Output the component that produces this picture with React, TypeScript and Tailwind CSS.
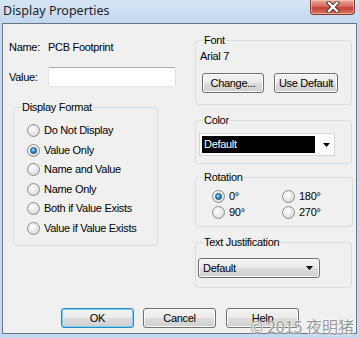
import React from "react";

const FONT = "font-['Liberation_Sans',Arial,sans-serif] text-[11px] leading-[13px] tracking-[-0.3px] text-black";

function Radio({ checked }: { checked?: boolean }) {
  return (
    <span className="inline-flex w-[13px] h-[13px] shrink-0 items-center justify-center rounded-full border border-[#8d8d8d] bg-[radial-gradient(circle_at_40%_35%,#ffffff_0%,#e6e6e6_55%,#c9c9c9_100%)]">
      {checked && (
        <span className="w-[7px] h-[7px] rounded-full border border-[#16486f] bg-[radial-gradient(circle_at_40%_35%,#9fe0ff_0%,#2a8ad0_55%,#0b4d86_100%)]" />
      )}
    </span>
  );
}

function RadioRow({ label, checked, className }: { label: string; checked?: boolean; className: string }) {
  return (
    <div className={"flex items-center gap-[4px] " + className}>
      <Radio checked={checked} />
      <span>{label}</span>
    </div>
  );
}

function Btn({ children, className, isDefault }: { children: React.ReactNode; className: string; isDefault?: boolean }) {
  return (
    <div
      className={
        "flex items-center justify-center h-[20px] rounded-[3px] border bg-[linear-gradient(#f3f3f3_0%,#ebebeb_48%,#dddddd_52%,#cfcfcf_100%)] " +
        (isDefault
          ? "border-[#2c88c0] shadow-[inset_0_0_0_1px_#76d4f9] "
          : "border-[#707070] shadow-[inset_0_0_0_1px_#fbfbfb] ") +
        className
      }
    >
      {children}
    </div>
  );
}

function Arrow() {
  return (
    <svg width="7" height="4" viewBox="0 0 7 4">
      <path d="M0 0 H7 L3.5 4 Z" fill="#000" />
    </svg>
  );
}

export default function App() {
  return (
    <div className={"w-[359px] h-[338px] flex flex-col bg-[#c5d9ef] overflow-hidden " + FONT}>
      {/* Title bar */}
      <div className="h-[23px] flex items-start bg-[linear-gradient(#d5e5f6,#c2d8ef)]">
        <div className="pl-[3px] pt-[3px] font-['Noto_Sans',sans-serif] text-[12.5px] leading-[16px] tracking-normal text-[#1e1e1e]">
          Display Properties
        </div>
        <div className="ml-auto mr-[4px] w-[45px] h-[15px] flex items-center justify-center rounded-b-[4px] border border-t-0 border-[#8a3a33] bg-[linear-gradient(#e9a99b_0%,#d46a5c_45%,#c24234_55%,#d9785f_100%)] shadow-[inset_0_0_0_1px_rgba(255,220,210,0.5)]">
          <svg width="14" height="12" viewBox="0 0 14 12">
            <path d="M3 2 L11 10 M11 2 L3 10" stroke="#4a2a2a" strokeWidth="4.2" strokeLinecap="square" />
            <path d="M3 2 L11 10 M11 2 L3 10" stroke="#ffffff" strokeWidth="2.4" strokeLinecap="square" />
          </svg>
        </div>
      </div>

      {/* Client area */}
      <div className="relative mx-[2px] h-[311px] flex flex-col border border-[#6b7789] bg-[#f0f0f0]">
        <div className="flex">
          {/* Left column */}
          <div className="w-[192px] pl-[6px] flex flex-col">
            <div className="mt-[17px] flex h-[13px]">
              <span className="w-[39px]">Name:</span>
              <span>PCB Footprint</span>
            </div>
            <div className="mt-[13px] flex items-center h-[20px]">
              <span className="w-[39px]">Value:</span>
              <div className="w-[128px] h-[20px] border border-[#abadb3] border-l-[#e2e3ea] border-r-[#dbdfe6] border-b-[#e3e9ef] bg-white rounded-[2px]" />
            </div>
            <fieldset className="ml-[4px] mt-[14px] w-[145px] border border-[#d5dfe5] rounded-[3px] p-0 m-0">
              <legend className="ml-[7px] px-[1px]">Display Format</legend>
              <div className="pl-[13px] pt-[7px] pb-[7px] flex flex-col">
                <RadioRow className="h-[19.5px]" label="Do Not Display" />
                <RadioRow className="h-[19.5px]" label="Value Only" checked />
                <RadioRow className="h-[19.5px]" label="Name and Value" />
                <RadioRow className="h-[19.5px]" label="Name Only" />
                <RadioRow className="h-[19.5px]" label="Both if Value Exists" />
                <RadioRow className="h-[19.5px]" label="Value if Value Exists" />
              </div>
            </fieldset>
          </div>

          {/* Right column */}
          <div className="w-[157px] flex flex-col">
            <fieldset className="mt-[10px] border border-[#d5dfe5] rounded-[3px] p-0 m-0">
              <legend className="ml-[7px] px-[1px]">Font</legend>
              <div className="pl-[4px] pt-[3px]">Arial 7</div>
              <div className="flex ml-[6px] mt-[10px] mb-[11px] gap-[10px]">
                <Btn className="w-[62px]">Change...</Btn>
                <Btn className="w-[64px]">Use Default</Btn>
              </div>
            </fieldset>

            <fieldset className="mt-[9px] border border-[#d5dfe5] rounded-[3px] p-0 m-0">
              <legend className="ml-[7px] px-[1px]">Color</legend>
              <div className="ml-[3px] mt-[6px] mb-[7px] w-[136px] h-[23px] flex items-center border border-[#d7d7d7] bg-white">
                <div className="ml-[2px] w-[113px] h-[17px] bg-black text-white flex items-center pl-[2px]">Default</div>
                <div className="ml-auto mr-[4px] flex items-center">
                  <Arrow />
                </div>
              </div>
            </fieldset>

            <fieldset className="mt-[7px] border border-[#d5dfe5] rounded-[3px] p-0 m-0">
              <legend className="ml-[7px] px-[1px]">Rotation</legend>
              <div className="pl-[16px] mt-[4px] mb-[5px] grid grid-cols-[70px_70px]">
                <RadioRow className="h-[16.5px]" label="0°" checked />
                <RadioRow className="h-[16.5px]" label="180°" />
                <RadioRow className="h-[16.5px]" label="90°" />
                <RadioRow className="h-[16.5px]" label="270°" />
              </div>
            </fieldset>

            <fieldset className="mt-[9px] border border-[#d5dfe5] rounded-[3px] p-0 m-0">
              <legend className="ml-[7px] px-[1px]">Text Justification</legend>
              <div className="ml-[2px] mt-[9px] mb-[9px] w-[122px] h-[20px] flex items-center rounded-[3px] border border-[#707070] bg-[linear-gradient(#f3f3f3_0%,#ebebeb_48%,#dddddd_52%,#cfcfcf_100%)] shadow-[inset_0_0_0_1px_#fbfbfb]">
                <span className="pl-[4px]">Default</span>
                <div className="ml-auto mr-[6px] flex items-center">
                  <Arrow />
                </div>
              </div>
            </fieldset>
          </div>
        </div>

        <div className="flex-1" />

        {/* Bottom buttons */}
        <div className="flex pl-[58px] mb-[5px]">
          <Btn className="w-[73px]" isDefault>OK</Btn>
          <Btn className="w-[73px] ml-[9px]">Cancel</Btn>
          <Btn className="w-[73px] ml-[10px]">Help</Btn>
        </div>

        {/* Watermark */}
        <div className="absolute right-[2px] bottom-[-2px] font-['Noto_Sans_CJK_SC','Noto_Sans',sans-serif] text-[16px] leading-[18px] tracking-normal text-[#9a9a9a] [text-shadow:0_0_2px_#ffffff,0_0_2px_#ffffff]">
          © 2015 夜明猪
        </div>
      </div>
      <div className="flex-1" />
    </div>
  );
}
